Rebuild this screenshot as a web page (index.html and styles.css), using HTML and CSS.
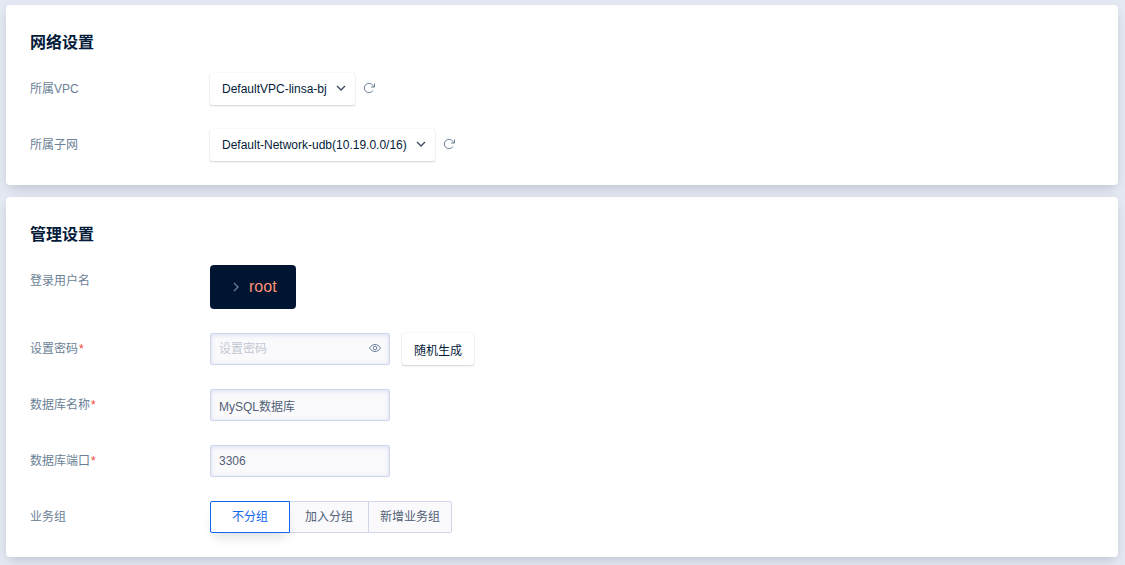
FILE: index.html
```html
<!DOCTYPE html>
<html lang="zh-CN">
  <head>
    <meta charset="utf-8" />
    <meta name="viewport" content="width=device-width, initial-scale=1.0" />
    <title>数据库设置</title>
    <link rel="stylesheet" href="styles.css">
  </head>
  <body>
    <form class="page">
      <section class="card">
        <h2>网络设置</h2>
        <div class="row">
          <label class="row-label" for="vpc">所属VPC</label>
          <div class="row-content">
            <div class="select">
              <select id="vpc">
                <option>DefaultVPC-linsa-bj</option>
              </select>
              <svg class="arrow" viewBox="0 0 10 10"><path d="M1 3l4 4 4-4" /></svg>
            </div>
            <button type="button" class="refresh" aria-label="刷新VPC">
              <svg viewBox="0 0 12 12"><path d="M10 8.500A4.700 4.700 0 1 1 10 3.500L11 4.800" /><path d="M11.500 1.500v3.500H8" /></svg>
            </button>
          </div>
        </div>
        <div class="row">
          <label class="row-label" for="subnet">所属子网</label>
          <div class="row-content">
            <div class="select">
              <select id="subnet">
                <option>Default-Network-udb(10.19.0.0/16)</option>
              </select>
              <svg class="arrow" viewBox="0 0 10 10"><path d="M1 3l4 4 4-4" /></svg>
            </div>
            <button type="button" class="refresh" aria-label="刷新子网">
              <svg viewBox="0 0 12 12"><path d="M10 8.500A4.700 4.700 0 1 1 10 3.500L11 4.800" /><path d="M11.500 1.500v3.500H8" /></svg>
            </button>
          </div>
        </div>
      </section>

      <section class="card">
        <h2>管理设置</h2>
        <div class="row">
          <span class="row-label">登录用户名</span>
          <div class="row-content">
            <div class="terminal">
              <svg viewBox="0 0 6 10"><path d="M1 1l4 4-4 4" /></svg>
              <span>root</span>
            </div>
          </div>
        </div>
        <div class="row">
          <label class="row-label" for="password">设置密码<span class="required">*</span></label>
          <div class="row-content">
            <div class="password">
              <input class="input" type="password" id="password" placeholder="设置密码" />
              <button type="button" class="eye" aria-label="显示密码">
                <svg viewBox="0 0 12 10"><path d="M.5 5C2 2.500 4 1.500 6 1.500S10 2.500 11.500 5C10 7.500 8 8.500 6 8.500S2 7.500.5 5z" /><circle cx="6" cy="5" r="1.800" /></svg>
              </button>
            </div>
            <button type="button" class="btn">随机生成</button>
          </div>
        </div>
        <div class="row">
          <label class="row-label" for="name">数据库名称<span class="required">*</span></label>
          <div class="row-content">
            <input class="input" type="text" id="name" value="MySQL数据库" />
          </div>
        </div>
        <div class="row">
          <label class="row-label" for="port">数据库端口<span class="required">*</span></label>
          <div class="row-content">
            <input class="input" type="text" id="port" value="3306" />
          </div>
        </div>
        <div class="row">
          <span class="row-label" id="group-label">业务组</span>
          <div class="row-content segmented" role="radiogroup" aria-labelledby="group-label">
            <label><input type="radio" name="group" checked /><span>不分组</span></label>
            <label><input type="radio" name="group" /><span>加入分组</span></label>
            <label><input type="radio" name="group" /><span>新增业务组</span></label>
          </div>
        </div>
      </section>
    </form>
  </body>
</html>
```
FILE: styles.css
```css
* {
  box-sizing: border-box;
}
body {
  margin: 0;
  background: #e3e8f2;
  color: #041b3a;
  font-family: "Liberation Sans", "Noto Sans CJK SC", sans-serif;
  font-size: 12px;
}
button,
input,
select {
  font: inherit;
}
svg {
  display: block;
  fill: none;
  stroke: currentColor;
}
.page {
  display: flex;
  flex-direction: column;
  gap: 12px;
  padding: 5px 7px 8px 6px;
}
.card {
  display: flex;
  flex-direction: column;
  gap: 24px;
  padding: 24px;
  border-radius: 4px;
  background: #fff;
  box-shadow: 0 6px 12px -4px rgba(10, 20, 40, 0.18), 0 0 8px rgba(10, 20, 50, 0.03);
}
.card h2 {
  margin: 0 0 -8px;
  font-size: 16px;
  font-weight: 600;
  line-height: 28px;
}
.row {
  display: flex;
}
.row-label {
  width: 180px;
  flex-shrink: 0;
  color: #6b7f96;
  line-height: 32px;
}
.required {
  padding-left: 1px;
  color: #f44336;
}
.row-content {
  display: flex;
}

/* dropdowns */
.select {
  position: relative;
}
.select select {
  appearance: none;
  height: 32px;
  padding: 0 28px 0 12px;
  border: none;
  border-radius: 2px;
  background: #fff;
  color: #041b3a;
  box-shadow: 0 1px 2px rgba(0, 0, 0, 0.16), 0 0 1px rgba(0, 0, 0, 0.16);
}
.arrow {
  position: absolute;
  top: 10px;
  right: 9px;
  width: 10px;
  height: 10px;
  color: #3b4a60;
  stroke-width: 1.3;
  pointer-events: none;
}
.refresh {
  width: 12px;
  margin-left: 8px;
  padding: 0 0 2px;
  border: none;
  background: none;
  color: #6b7f96;
}

.terminal {
  display: flex;
  align-items: center;
  gap: 10px;
  height: 44px;
  padding: 0 19px 0 23px;
  border-radius: 4px;
  background: #001531;
  color: #fc9375;
  font-size: 16px;
}
.terminal svg {
  width: 6px;
  height: 10px;
  color: #6b7f96;
  stroke-width: 1.3;
}

/* inputs */
.input {
  width: 180px;
  height: 32px;
  padding: 0 8px;
  border: 1px solid #d0d6ec;
  border-radius: 2px;
  background: #fafafd;
  color: #526075;
  line-height: 16px;
  box-shadow: inset 0 1px 4px rgba(180, 190, 230, 0.5);
}
.input::placeholder {
  color: #c3c8d2;
}
.password {
  position: relative;
}
.password .input {
  padding-right: 28px;
}
.eye {
  position: absolute;
  top: 0;
  right: 9px;
  width: 12px;
  height: 30px;
  padding: 0;
  border: none;
  background: none;
  color: #6b7f96;
}
.btn {
  height: 32px;
  margin-left: 12px;
  padding: 0 12px;
  border: none;
  border-radius: 2px;
  background: #fff;
  color: #041b3a;
  box-shadow: 0 1px 2px rgba(0, 0, 0, 0.16), 0 0 1px rgba(0, 0, 0, 0.16);
}

/* group switch */
.segmented label {
  position: relative;
}
.segmented label + label {
  margin-left: -1px;
}
.segmented input {
  position: absolute;
  opacity: 0;
}
.segmented span {
  display: block;
  min-width: 80px;
  padding: 1px 11px 0;
  border: 1px solid #d0d6ec;
  background: #fafafd;
  color: #526075;
  line-height: 29px;
  text-align: center;
}
.segmented label:first-child span {
  border-radius: 2px 0 0 2px;
}
.segmented label:last-child span {
  border-radius: 0 2px 2px 0;
}
.segmented input:checked + span {
  position: relative;
  z-index: 1;
  border-color: #1166ee;
  background: #fff;
  color: #1166ee;
  box-shadow: 0 8px 12px -4px rgba(10, 20, 50, 0.14);
}
```
